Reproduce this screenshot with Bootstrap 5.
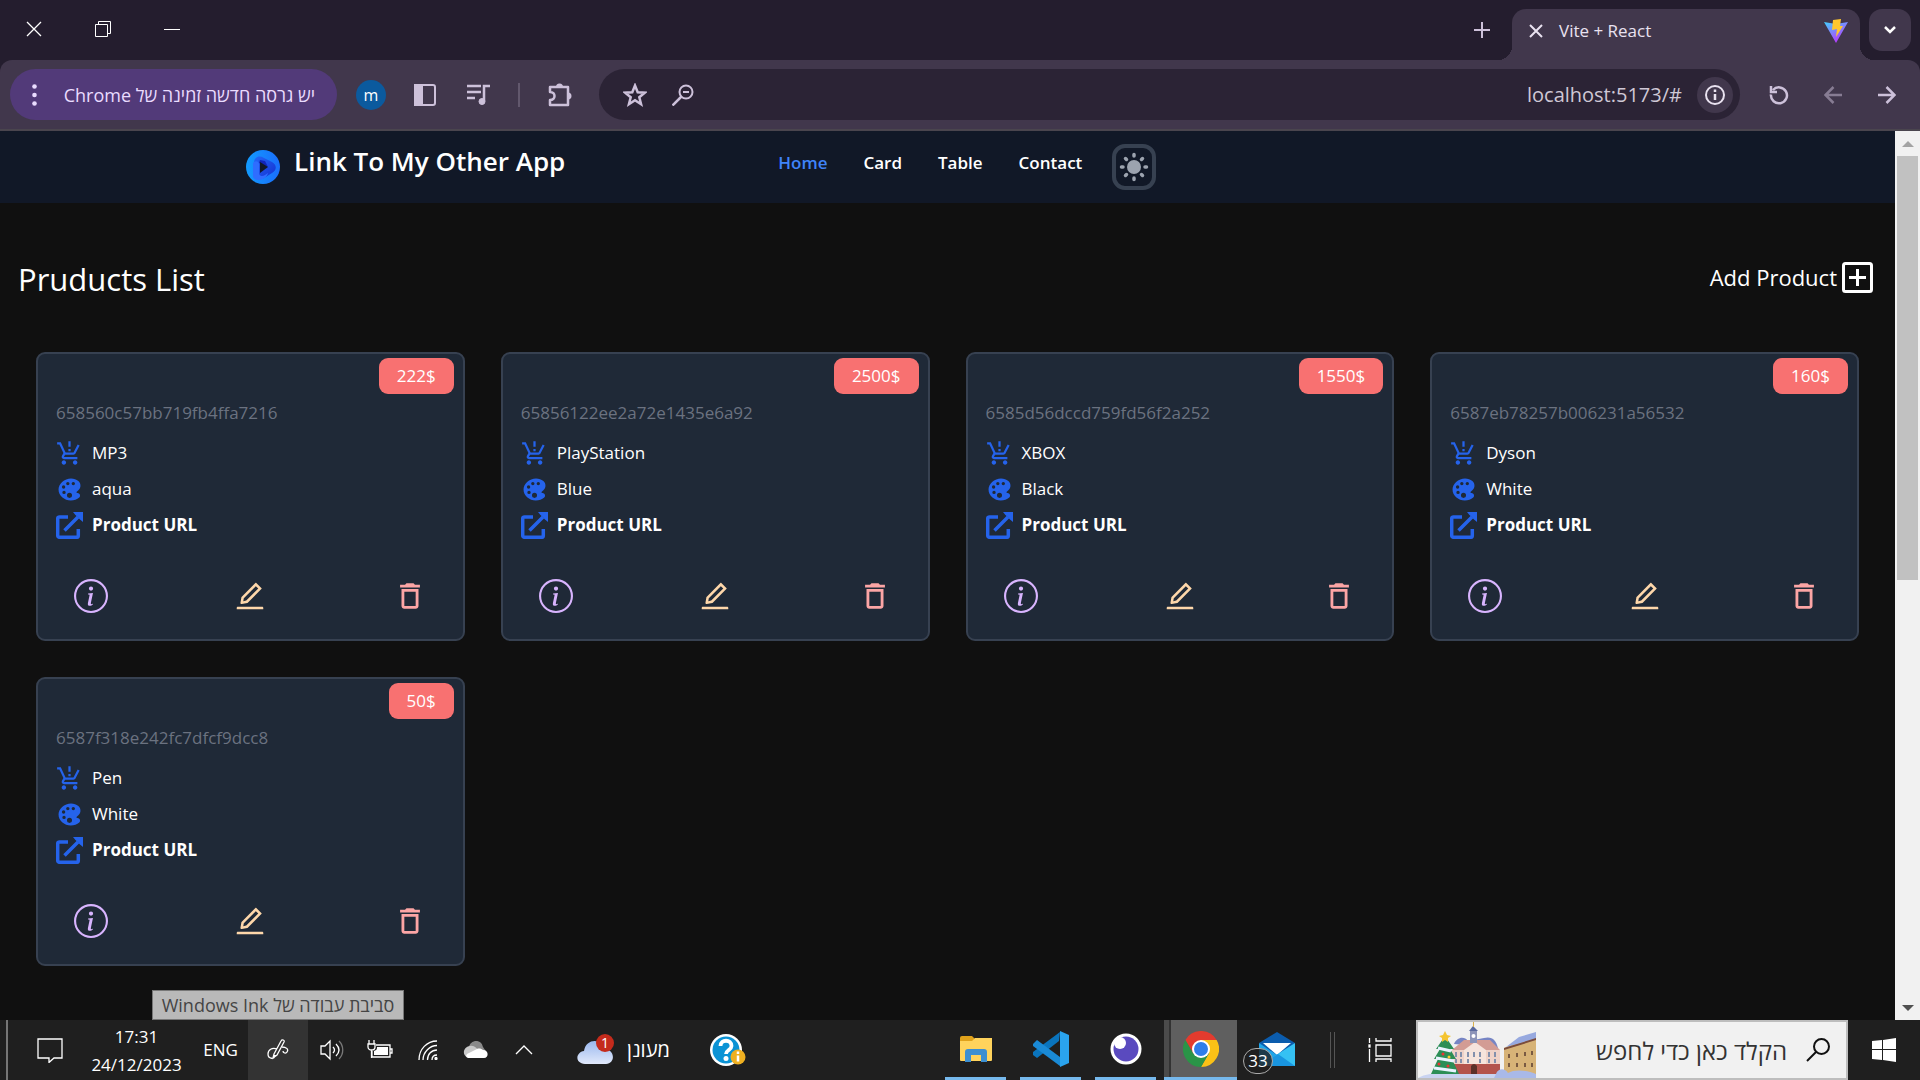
<!DOCTYPE html>
<html lang="en">
<head>
<meta charset="utf-8">
<meta name="viewport" content="width=device-width, initial-scale=1">
<title>Vite + React</title>
<link href="https://cdn.jsdelivr.net/npm/bootstrap@5.3.0/dist/css/bootstrap.min.css" rel="stylesheet">
<style>
  body { font-family: "Open Sans", "Noto Sans", sans-serif; font-size: 17px; line-height: 24px; background: #101010; color: #fff; }
  button { color: inherit; background: none; border: 0; padding: 0; }
  svg { display: block; flex: none; }
  .ic { fill: none; stroke: currentColor; stroke-width: 2; }
  .hair { stroke-width: 1; }
  .thin { stroke-width: 1.3; }

  /* browser frame */
  .tabstrip { height: 60px; background: #241d2e; }
  .win-btns { margin-left: -1px; }
  .win-btn { width: 69px; height: 58px; }
  .new-tab { width: 60px; height: 60px; color: #cdc1da; }
  .tab-active { width: 348px; height: 51px; border-radius: 14px 14px 0 0; background: #41374c; position: relative; padding: 0 12px 8px 17px; color: #e9e2f0; font-size: 17px; }
  .tab-active::before, .tab-active::after { content: ""; position: absolute; bottom: 0; width: 14px; height: 14px; }
  .tab-active::before { left: -14px; background: radial-gradient(circle at 0 0, transparent 14px, #41374c 14px); }
  .tab-active::after { right: -14px; background: radial-gradient(circle at 100% 0, transparent 14px, #41374c 14px); }
  .tab-list { width: 42px; height: 42px; border-radius: 13px; background: #41374c; margin: 9px; }
  .toolbar-wrap { background: #241d2e; }
  .toolbar { height: 71px; padding: 0 6px 0 10px; background: #41374c; border-bottom: 2px solid #4a454e; border-radius: 12px 12px 0 0; color: #cdc1da; }
  .update-pill { height: 51px; width: 327px; border-radius: 26px; background: #523a79; color: #eadcff; font-size: 18px; padding: 0 22px; }
  .avatar { width: 30px; height: 30px; border-radius: 50%; background: #0b5a9e; color: #fff; font-size: 16px; margin: 0 12px 0 19px; }
  .tool { width: 54px; height: 48px; }
  .tool-line { width: 2px; height: 24px; background: #62586d; margin: 0 14px 0 12px; }
  .omnibox { height: 51px; border-radius: 26px; background: #2b2335; padding: 0 7px 0 12px; margin: 0 12px 0 11px; }
  .omnibox .tool { width: 48px; }
  .address { background: none; border: 0; outline: 0; color: #cfc8d6; font-size: 20px; text-align: right; min-width: 0; }
  .site-info { width: 36px; height: 36px; border-radius: 50%; background: #41374c; color: #e9e2f0; margin-left: 13px; }

  /* application */
  .site-nav { min-height: 72px; background: #111827; padding: 12px 0 12px 246px; }
  .brand-logo { margin: 6px 14px 0 0; }
  .brand-name { font-size: 26px; line-height: 36px; font-weight: 600; color: #fff; text-decoration: none; }
  .site-links { gap: 36px; margin-left: 213px; padding-top: 8px; }
  .site-links a { color: #fff; font-weight: 600; font-size: 17px; text-decoration: none; }
  .site-links a.here { color: #3f83f8; }
  .theme-btn { width: 44px; height: 46px; border: 4px solid #374151; border-radius: 13px; color: #9ca3af; margin: 1px 0 0 30px; }
  .list-head { padding: 53px 22px 50px 18px; }
  .list-title { font-size: 31px; line-height: 46px; font-weight: 400; }
  .add-btn { font-size: 22px; line-height: 32px; gap: 5px; margin-bottom: 4px; }
  .products { padding: 0 36px; }
  .products > .row { --bs-gutter-x: 36px; --bs-gutter-y: 0; row-gap: 36px; }
  .product { min-height: 289px; border: 2px solid #374151; border-radius: 9px; background: #1f2937; color: #fff; padding: 44px 18px 0; }
  .price { position: absolute; top: 4px; right: 9px; height: 36px; border-radius: 9px; background: #f87171; padding: 6px 18px; }
  .pid { color: #6b7280; margin-bottom: 7px; line-height: 30px; }
  .field { gap: 9px; height: 36px; }
  .field svg { color: #2563eb; }
  .field a { color: #fff; font-weight: 700; text-decoration: none; }
  .actions { padding: 36px 18px 0; }
  .c-info { color: #d8b4fe; } .c-edit { color: #fed7aa; } .c-del { color: #fca5a5; }
  .sbar { width: 25px; background: #f1f1f1; padding: 0 2px; }
  .sbar-cap { height: 25px; }
  .sbar-thumb { background: #c1c1c1; }

  /* desktop task bar */
  .taskbar { height: 60px; background: #1f1f1f; }
  .edge { width: 8px; border-right: 2px solid #767676; margin-right: 12px; }
  .cell { width: 48px; }
  .cell-m { width: 60px; }
  .clock { width: 113px; font-size: 17px; line-height: 28px; padding-top: 3px; }
  .lang { width: 55px; font-size: 17px; }
  .ink { background: #333; position: relative; }
  .tip { position: absolute; bottom: 100%; left: 50%; transform: translateX(-50%); white-space: nowrap; background: #b9b9b9; border: 1px solid #777; color: #454545; width: 252px; line-height: 28px; font-size: 18px; }
  .weather { margin-left: 29px; gap: 12px; font-size: 20px; }
  .help { margin-left: 40px; }
  .app { width: 61px; margin-right: 14px; border-bottom: 3px solid #76b9ed; }
  .app-on { width: 73px; margin: 0 9px 0 -6px; background: linear-gradient(90deg, #4b4b4b 5px, #333 5px, #333 7px, #5f5f5f 7px); }
  .app-off { border-color: transparent; position: relative; margin-right: 23px; }
  .mail-count { position: absolute; left: -3px; bottom: 3px; width: 30px; height: 26px; border: 1px solid #aaa; border-radius: 13px; background: #1f1f1fcc; font-size: 17px; line-height: 24px; }
  .grip { width: 5px; height: 36px; border: solid #555; border-width: 0 1px; margin-right: 15px; }
  .search { width: 432px; margin-left: 6px; border: 2px solid #bdbdbd; background: #f1f1f1; padding-right: 16px; color: #111; }
  .search input { border: 0; outline: 0; background: none; color: #333; min-width: 0; font-size: 24px; padding: 0 19px; }
  .search input::placeholder { color: #333; opacity: 1; }
  .start { width: 72px; }
</style>
<script src="https://cdn.jsdelivr.net/npm/bootstrap@5.3.0/dist/js/bootstrap.bundle.min.js"></script>
</head>
<body class="d-flex flex-column min-vh-100 overflow-x-hidden">

<svg width="0" height="0" class="position-absolute" aria-hidden="true">
  <symbol id="cart" viewBox="0 0 24 24"><path fill="currentColor" d="M13 10h-2V8h2v2zm0-4h-2V1h2v5zM7 18c-1.1 0-1.99.9-1.99 2S5.900 22 7 22s2-.9 2-2-.9-2-2-2zm10 0c-1.100 0-1.990.9-1.990 2s.890 2 1.990 2 2-.9 2-2-.9-2-2-2zm-8.900-5h7.450c.75 0 1.410-.41 1.750-1.030L21 4.960 19.250 4l-3.700 7H8.530L4.270 2H1v2h2l3.600 7.590-1.350 2.440C4.520 15.370 5.480 17 7 17h12v-2H7l1.100-2z"/></symbol>
  <symbol id="palette" viewBox="0 0 512 512"><path fill="currentColor" d="M441 336.2l-.06-.05c-9.930-9.180-22.780-11.340-32.160-12.920l-.69-.12c-9.050-1.490-10.480-2.500-14.580-6.170-2.440-2.170-5.350-5.650-5.350-9.940s2.910-7.770 5.340-9.940l30.280-26.870c25.920-22.910 40.200-53.660 40.200-86.590s-14.250-63.680-40.200-86.600c-35.890-31.590-85-49-138.370-49C223.720 48 162 71.370 116 112.110c-43.870 38.770-68 90.710-68 146.240s24.160 107.470 68 146.230c21.750 19.240 47.490 34.180 76.520 44.420a266.170 266.170 0 0 0 86.870 15h1.810c61 0 119.090-20.570 159.390-56.400 9.700-8.560 15.150-20.830 15.340-34.560.21-14.170-5.370-27.950-14.930-36.840zM112 208a32 32 0 1 1 32 32 32 32 0 0 1-32-32zm40 135a32 32 0 1 1 32-32 32 32 0 0 1-32 32zm40-199a32 32 0 1 1 32 32 32 32 0 0 1-32-32zm64 271a48 48 0 1 1 48-48 48 48 0 0 1-48 48zm72-239a32 32 0 1 1 32-32 32 32 0 0 1-32 32z"/></symbol>
  <symbol id="open" viewBox="0 0 27 27"><path fill="none" stroke="currentColor" stroke-width="3.500" d="M12 5H3.500a1.800 1.800 0 0 0-1.800 1.800v16.700a1.800 1.800 0 0 0 1.800 1.800h17a1.800 1.800 0 0 0 1.800-1.800V17M8.500 18.500 22 5"/><path fill="currentColor" d="M17 0h10v10l-3-2.500-5-5z"/></symbol>
  <symbol id="info" viewBox="0 0 16 16"><path fill="currentColor" d="M8 15A7 7 0 1 1 8 1a7 7 0 0 1 0 14zm0 1A8 8 0 1 0 8 0a8 8 0 0 0 0 16z"/><path fill="currentColor" d="m8.930 6.588-2.290.287-.082.38.45.083c.294.07.352.176.288.469l-.738 3.468c-.194.897.105 1.319.808 1.319.545 0 1.178-.252 1.465-.598l.088-.416c-.2.176-.492.246-.686.246-.275 0-.375-.193-.304-.533L8.930 6.588zM9 4.500a1 1 0 1 1-2 0 1 1 0 0 1 2 0z"/></symbol>
  <symbol id="edit" viewBox="0 0 1024 1024"><path fill="currentColor" d="M257.700 752c2 0 4-.2 6-.5L431.900 722c2-.4 3.900-1.300 5.300-2.800l423.900-423.900a9.960 9.960 0 0 0 0-14.100L694.900 114.900c-1.900-1.900-4.400-2.900-7.100-2.900s-5.200 1-7.100 2.900L256.800 538.800c-1.500 1.500-2.400 3.300-2.800 5.300l-29.500 168.200a33.500 33.500 0 0 0 9.400 29.800c6.600 6.400 14.900 9.900 23.800 9.900zm67.400-174.400L687.800 215l73.300 73.300-362.700 362.600-88.900 15.700 15.600-89zM880 836H144c-17.700 0-32 14.300-32 32v36c0 4.400 3.600 8 8 8h784c4.400 0 8-3.600 8-8v-36c0-17.700-14.300-32-32-32z"/></symbol>
  <symbol id="trash" viewBox="0 0 24 24"><path fill="currentColor" d="M16 9v10H8V9h8m-1.500-6h-5l-1 1H5v2h14V4h-3.500l-1-1zM18 7H6v12c0 1.100.9 2 2 2h8c1.100 0 2-.9 2-2V7z"/></symbol>
</svg>

<header>
  <div class="tabstrip d-flex align-items-start">
    <div class="win-btns d-flex">
      <button class="win-btn d-flex align-items-center justify-content-center" aria-label="Close window"><svg class="ic thin" width="16" height="16"><path d="m1 1 14 14M15 1 1 15"/></svg></button>
      <button class="win-btn d-flex align-items-center justify-content-center" aria-label="Restore window"><svg class="ic hair" width="16" height="16"><path d="M.5 3.500h12v12H.5zM3.500 3.500v-3h12v12h-3"/></svg></button>
      <button class="win-btn d-flex align-items-center justify-content-center" aria-label="Minimize window"><svg class="ic hair" width="16" height="16"><path d="M0 8.500h16"/></svg></button>
    </div>
    <button class="new-tab ms-auto d-flex align-items-center justify-content-center" aria-label="New tab"><svg class="ic" width="16" height="16"><path d="M0 8h16M8 0v16"/></svg></button>
    <div class="tab-active d-flex align-items-center align-self-end">
      <button class="me-3" aria-label="Close tab"><svg class="ic" width="14" height="14"><path d="m1 1 12 12M13 1 1 13"/></svg></button>
      <span>Vite + React</span>
      <svg class="ms-auto" width="24" height="24" viewBox="0 0 24 24"><defs><linearGradient id="vg" x1="0" y1="0" x2=".6" y2="1"><stop offset="0" stop-color="#41d1ff"/><stop offset="1" stop-color="#bd34fe"/></linearGradient></defs><path fill="url(#vg)" d="M0 3 12 24 24 3 12 5z"/><path fill="#ffc72e" d="m9 1 8-1-1 7h3l-7 11 1-8-5 1z"/></svg>
    </div>
    <button class="tab-list d-flex align-items-center justify-content-center" aria-label="Search tabs"><svg class="ic" width="14" height="9"><path stroke-width="2.500" d="m2 1 5 5 5-5"/></svg></button>
  </div>
  <div class="toolbar-wrap">
  <div class="toolbar d-flex align-items-center">
    <button class="update-pill d-flex align-items-center justify-content-between">
      <svg width="5" height="22" fill="currentColor"><circle cx="2.500" cy="2.500" r="2.300"/><circle cx="2.500" cy="11" r="2.300"/><circle cx="2.500" cy="19.500" r="2.300"/></svg>
      <span dir="rtl">יש גרסה חדשה זמינה של Chrome</span>
    </button>
    <button class="avatar d-flex align-items-center justify-content-center" aria-label="Profile">m</button>
    <button class="tool d-flex align-items-center justify-content-center" aria-label="Side panel"><svg class="ic" width="22" height="22"><rect x="1" y="1" width="20" height="20" rx="2"/><path fill="currentColor" d="M1 1h7v20H1z"/></svg></button>
    <button class="tool d-flex align-items-center justify-content-center" aria-label="Media"><svg class="ic" width="24" height="22"><path stroke-width="2.500" d="M0 2h14M0 8h14M0 14h8M17 17V2h6"/><circle cx="15" cy="17.500" r="3" fill="currentColor" stroke-width="1"/></svg></button>
    <span class="tool-line"></span>
    <button class="tool d-flex align-items-center justify-content-center" aria-label="Extensions"><svg class="ic" width="26" height="26"><path stroke-width="2.500" d="M2 5h18v18H2v-5c6 0 6-8 0-8z" stroke-linejoin="round"/><path stroke="none" fill="currentColor" d="M8 5a3.500 3.500 0 0 1 7 0zm12 5.500a3.500 3.500 0 0 1 0 7z"/></svg></button>
    <div class="omnibox d-flex align-items-center flex-grow-1">
      <button class="tool d-flex align-items-center justify-content-center" aria-label="Bookmark"><svg class="ic" width="24" height="24"><path stroke-width="2.500" d="m12 2.500 2.700 6.700 7 .5-5.400 4.500 1.800 7L12 17.300l-6.100 3.900 1.800-7-5.400-4.500 7-.5z"/></svg></button>
      <button class="tool d-flex align-items-center justify-content-center" aria-label="Zoom"><svg class="ic" width="22" height="22"><circle cx="14" cy="8" r="6.500"/><path stroke-width="2.500" d="m9.500 12.500-9 9"/><path d="M11 8h6"/></svg></button>
      <input class="address flex-grow-1" aria-label="Address" value="localhost:5173/#">
      <button class="site-info d-flex align-items-center justify-content-center" aria-label="Site information"><svg class="ic" width="22" height="22"><circle cx="11" cy="11" r="9"/><path stroke-width="2.500" d="M11 10v6M11 5.500V8"/></svg></button>
    </div>
    <button class="tool d-flex align-items-center justify-content-center" aria-label="Reload"><svg class="ic" width="20" height="20"><path stroke-width="2.500" d="M2 9.500A8 8 0 1 0 4 5M2 1v6h6"/></svg></button>
    <button class="tool d-flex align-items-center justify-content-center opacity-50" aria-label="Back"><svg class="ic" width="18" height="18"><path stroke-width="2.500" d="M18 9H2M9.500 1 1.500 9l8 8"/></svg></button>
    <button class="tool d-flex align-items-center justify-content-center" aria-label="Forward"><svg class="ic" width="18" height="18"><path stroke-width="2.500" d="M0 9h16M8.500 1l8 8-8 8"/></svg></button>
  </div>
  </div>
</header>

<div class="d-flex flex-grow-1">
  <div class="flex-grow-1">
    <nav class="site-nav d-flex align-items-start">
      <svg class="brand-logo" width="34" height="36" viewBox="0 0 34 36"><defs><linearGradient id="lg" x1="0" y1="0" x2="1" y2="0"><stop offset="0" stop-color="#129bff"/><stop offset="1" stop-color="#1a6dfb"/></linearGradient><linearGradient id="lb" x1="0" y1="0" x2="1" y2="1"><stop offset="0" stop-color="#2367f8"/><stop offset="1" stop-color="#1430cf"/></linearGradient></defs><circle cx="17" cy="18" r="17" fill="url(#lg)"/><path fill="url(#lb)" d="M8 14c0-6 5-8 10-5l8 4c5 3 5 8 0 11l-8 5c-4 2-10 1-10-4z"/><path fill="#2f6dff" d="M7 27V14c2-3 6-2 6 1v9c0 3 3 4 6 2l3-2c-1 4-5 7-9 7-3 0-6-1-6-4z"/><path fill="#1225b8" d="m13 14 9 4-3-6-5-1z"/><path fill="#111827" d="m14 13 8 5-8 6z"/></svg>
      <a class="brand-name" href="#">Link To My Other App</a>
      <div class="site-links d-flex"><a class="here" href="#">Home</a><a href="#">Card</a><a href="#">Table</a><a href="#">Contact</a></div>
      <button class="theme-btn d-flex align-items-center justify-content-center" aria-label="Toggle theme"><svg width="30" height="30" viewBox="-15 -15 30 30" fill="none" stroke="currentColor" stroke-width="3.500" stroke-linecap="round"><circle r="7" fill="currentColor" stroke="none"/><path d="M0-12.500v1.500M0 12.500v-1.500M-12.500 0h1.500M12.500 0h-1.500M-8.500-8.500l1 1M8.500 8.500l-1-1M-8.500 8.500l1-1M8.500-8.500l-1 1"/></svg></button>
    </nav>
    <main>
      <div class="list-head d-flex justify-content-between align-items-center">
        <h1 class="list-title mb-0">Pruducts List</h1>
        <button class="add-btn d-flex align-items-center">Add Product <svg class="ic" width="31" height="31"><rect x="1.500" y="1.500" width="28" height="28" rx="2" stroke-width="3"/><path stroke-width="3" d="M7 15.500h17M15.500 7v17"/></svg></button>
      </div>
      <div class="products">
        <div class="row row-cols-4">
          <div class="col"><article class="card product">
            <span class="price">222$</span>
            <div class="pid">658560c57bb719fb4ffa7216</div>
            <div class="field d-flex align-items-center"><svg width="27" height="27"><use href="#cart"/></svg>MP3</div>
            <div class="field d-flex align-items-center"><svg width="27" height="27"><use href="#palette"/></svg>aqua</div>
            <div class="field d-flex align-items-center"><svg width="27" height="27"><use href="#open"/></svg><a href="#">Product URL</a></div>
            <div class="actions d-flex justify-content-between"><button class="c-info" aria-label="Details"><svg width="34" height="34"><use href="#info"/></svg></button><button class="c-edit" aria-label="Edit"><svg width="34" height="34"><use href="#edit"/></svg></button><button class="c-del" aria-label="Delete"><svg width="34" height="34"><use href="#trash"/></svg></button></div>
          </article></div>
          <div class="col"><article class="card product">
            <span class="price">2500$</span>
            <div class="pid">65856122ee2a72e1435e6a92</div>
            <div class="field d-flex align-items-center"><svg width="27" height="27"><use href="#cart"/></svg>PlayStation</div>
            <div class="field d-flex align-items-center"><svg width="27" height="27"><use href="#palette"/></svg>Blue</div>
            <div class="field d-flex align-items-center"><svg width="27" height="27"><use href="#open"/></svg><a href="#">Product URL</a></div>
            <div class="actions d-flex justify-content-between"><button class="c-info" aria-label="Details"><svg width="34" height="34"><use href="#info"/></svg></button><button class="c-edit" aria-label="Edit"><svg width="34" height="34"><use href="#edit"/></svg></button><button class="c-del" aria-label="Delete"><svg width="34" height="34"><use href="#trash"/></svg></button></div>
          </article></div>
          <div class="col"><article class="card product">
            <span class="price">1550$</span>
            <div class="pid">6585d56dccd759fd56f2a252</div>
            <div class="field d-flex align-items-center"><svg width="27" height="27"><use href="#cart"/></svg>XBOX</div>
            <div class="field d-flex align-items-center"><svg width="27" height="27"><use href="#palette"/></svg>Black</div>
            <div class="field d-flex align-items-center"><svg width="27" height="27"><use href="#open"/></svg><a href="#">Product URL</a></div>
            <div class="actions d-flex justify-content-between"><button class="c-info" aria-label="Details"><svg width="34" height="34"><use href="#info"/></svg></button><button class="c-edit" aria-label="Edit"><svg width="34" height="34"><use href="#edit"/></svg></button><button class="c-del" aria-label="Delete"><svg width="34" height="34"><use href="#trash"/></svg></button></div>
          </article></div>
          <div class="col"><article class="card product">
            <span class="price">160$</span>
            <div class="pid">6587eb78257b006231a56532</div>
            <div class="field d-flex align-items-center"><svg width="27" height="27"><use href="#cart"/></svg>Dyson</div>
            <div class="field d-flex align-items-center"><svg width="27" height="27"><use href="#palette"/></svg>White</div>
            <div class="field d-flex align-items-center"><svg width="27" height="27"><use href="#open"/></svg><a href="#">Product URL</a></div>
            <div class="actions d-flex justify-content-between"><button class="c-info" aria-label="Details"><svg width="34" height="34"><use href="#info"/></svg></button><button class="c-edit" aria-label="Edit"><svg width="34" height="34"><use href="#edit"/></svg></button><button class="c-del" aria-label="Delete"><svg width="34" height="34"><use href="#trash"/></svg></button></div>
          </article></div>
          <div class="col"><article class="card product">
            <span class="price">50$</span>
            <div class="pid">6587f318e242fc7dfcf9dcc8</div>
            <div class="field d-flex align-items-center"><svg width="27" height="27"><use href="#cart"/></svg>Pen</div>
            <div class="field d-flex align-items-center"><svg width="27" height="27"><use href="#palette"/></svg>White</div>
            <div class="field d-flex align-items-center"><svg width="27" height="27"><use href="#open"/></svg><a href="#">Product URL</a></div>
            <div class="actions d-flex justify-content-between"><button class="c-info" aria-label="Details"><svg width="34" height="34"><use href="#info"/></svg></button><button class="c-edit" aria-label="Edit"><svg width="34" height="34"><use href="#edit"/></svg></button><button class="c-del" aria-label="Delete"><svg width="34" height="34"><use href="#trash"/></svg></button></div>
          </article></div>
        </div>
      </div>
    </main>
  </div>
  <div class="sbar d-flex flex-column" aria-hidden="true">
    <div class="sbar-cap d-flex align-items-center justify-content-center"><svg width="12" height="6"><path fill="#a3a3a3" d="m0 6 6-6 6 6z"/></svg></div>
    <div class="flex-grow-1 d-flex flex-column"><div class="sbar-thumb" style="flex:424"></div><div style="flex:415"></div></div>
    <div class="sbar-cap d-flex align-items-center justify-content-center"><svg width="12" height="6"><path fill="#505050" d="m0 0 6 6 6-6z"/></svg></div>
  </div>
</div>

<footer class="taskbar d-flex align-items-stretch">
  <div class="edge"></div>
  <button class="cell-m d-flex align-items-center justify-content-center" aria-label="Notifications"><svg class="ic thin" width="26" height="26"><path d="M1 2h24v19h-8l-5 4.500V21H1z"/></svg></button>
  <div class="clock text-center"><div>17:31</div><div>24/12/2023</div></div>
  <button class="lang">ENG</button>
  <button class="cell-m ink d-flex align-items-center justify-content-center" aria-label="Windows Ink"><svg class="ic thin" width="22" height="24"><path d="m7 16 7-13c1-2 4-1 3 1l-7 13-4 3zM10 11c-5-2-9 1-9 5 0 5 7 6 7 1M15 9c4 0 7 2 5 5-1 2-4 1-4-1"/></svg><span class="tip" dir="rtl">סביבת עבודה של Windows Ink</span></button>
  <button class="cell d-flex align-items-center justify-content-center" aria-label="Volume"><svg class="ic thin" width="24" height="22"><path d="M1 7h4l5-5v18l-5-5H1zM13 8c2 2 2 4 0 6M16 5c4 4 4 8 0 12"/><path opacity=".4" d="M19 2c5 5 5 13 0 18"/></svg></button>
  <button class="cell d-flex align-items-center justify-content-center" aria-label="Battery"><svg class="ic thin" width="26" height="20"><path d="M9 5h14v12H5v-6M23 9h2v4h-2M2 0v4M7 0v4M1 4h7v3c0 4-7 4-7 0zM4.500 10v8"/><path fill="currentColor" stroke="none" d="M10 7h11v8H7v-4c3-1 3-2 3-4z"/></svg></button>
  <button class="cell d-flex align-items-center justify-content-center" aria-label="Network"><svg class="ic thin" width="20" height="20"><path d="M1 20C1 9 9 1 19 1M5 20C5 12 12 5.500 19 5.500M9.500 20c0-6 4-10 9.500-10M14 20c0-4 2-5 5-5"/><circle cx="18" cy="18.500" r="1" fill="currentColor"/></svg></button>
  <button class="cell d-flex align-items-center justify-content-center" aria-label="OneDrive"><svg width="26" height="18"><path fill="#8a8a8a" d="M6 8a7 7 0 0 1 14-2l4 6H6z"/><path fill="#c9c9c9" d="M7 5c4-1 8 3 9 6L4 16C-1 14 0 6 7 5z"/><path fill="#fff" d="M5 17c-3-1-2-4 1-5l8-4c2-1 5 0 6 1 6 0 6 8 1 8z"/></svg></button>
  <button class="cell d-flex align-items-center justify-content-center" aria-label="Hidden icons"><svg class="ic thin" width="18" height="10"><path d="m1 9 8-8 8 8"/></svg></button>
  <button class="weather d-flex align-items-center">
    <svg width="38" height="32" viewBox="0 0 38 32"><defs><linearGradient id="cg" x1="0" y1="0" x2="0" y2="1"><stop offset="0" stop-color="#9ab8ee"/><stop offset="1" stop-color="#e1e9fb"/></linearGradient></defs><path fill="url(#cg)" d="M8 30C-3 29-1 18 7 17 9 4 25 4 27 15c11 0 12 14 2 15z"/><circle cx="28" cy="9" r="9" fill="#c42b1c"/><text x="28" y="14" text-anchor="middle" font-size="14" fill="#fff">1</text></svg>
    <span dir="rtl">מעונן</span>
  </button>
  <button class="help d-flex align-items-center" aria-label="Help"><svg width="36" height="34" viewBox="0 0 36 34"><circle cx="16" cy="17" r="16" fill="#fff"/><circle cx="16" cy="17" r="13.500" fill="#0b93d5"/><path d="M10.500 13c0-7 11-7 11 0 0 4-5.500 4-5.500 8" fill="none" stroke="#fff" stroke-width="3.800"/><circle cx="16" cy="25.500" r="2.500" fill="#fff"/><circle cx="28" cy="24" r="7.500" fill="#efb021"/><path stroke="#fff" stroke-width="2.500" d="M28 22.500v6M28 18.500V21"/></svg></button>

  <div class="d-flex ms-auto align-items-stretch">
    <button class="app d-flex align-items-center justify-content-center" aria-label="File Explorer"><svg width="32" height="28"><path fill="#e0a21b" d="M0 3q0-2 2-2h10l3 3-3 4H0z"/><path fill="#ffd35c" d="M0 6h12l3-3h17v22q0 1-1 1H1q-1 0-1-1z"/><path fill="#3d8fd1" d="M5 17q0-3 3-3h16q3 0 3 3v10h-6v-7H11v7H5z"/></svg></button>
    <button class="app d-flex align-items-center justify-content-center" aria-label="Visual Studio Code"><svg width="36" height="36" viewBox="0 0 36 36"><path fill="#0a74bd" d="m27 1-1 9L4 27l-4-3v-3z"/><path fill="#1a8ad6" d="m0 13 4-4 23 17v9L0 15z"/><path fill="#2aa3ee" d="m27 0 9 4v28l-9 4z"/></svg></button>
    <button class="app d-flex align-items-center justify-content-center" aria-label="Insomnia"><svg width="32" height="32"><circle cx="16" cy="16" r="15.500" fill="#fff"/><circle cx="16" cy="16" r="12.500" fill="#5a4abf"/><circle cx="10" cy="10" r="6" fill="#fff"/></svg></button>
    <button class="app app-on d-flex align-items-center justify-content-center" aria-label="Chrome"><svg width="36" height="36" viewBox="-18 -18 36 36"><path fill="#e33b2e" d="M0-9h15.600A18 18 0 0 0-15.600-9L-7.800 4.500 0 0z"/><path fill="#fbc116" d="M15.600-9A18 18 0 0 1 0 18L7.800 4.500 0-9z"/><path fill="#2a9447" d="M-15.600-9A18 18 0 0 0 0 18L7.800 4.500 0 9l-7.800-4.500z"/><circle r="9" fill="#fff"/><circle r="7" fill="#2f7de9"/></svg></button>
    <button class="app app-off d-flex align-items-center justify-content-center" aria-label="Mail"><svg width="36" height="34"><path fill="#0b5cad" d="M0 11 18 0l18 11-10 12H10z"/><path fill="#fff" d="M4 11h28L18 23z"/><path fill="#1fa5e8" d="m0 11 18 12v11H0z"/><path fill="#35c1f3" d="M36 11 0 34h36z"/><path fill="#1995e0" d="m19 22 17 12H0z"/></svg><span class="mail-count">33</span></button>
    <span class="grip align-self-center"></span>
    <button class="cell-m d-flex align-items-center justify-content-center" aria-label="Task view"><svg class="ic thin" width="24" height="24"><path d="M8 0v3h15V0M8 7h15v11H8zM8 24v-3h15v3M1.500 0v5M1.500 11v13"/><path fill="currentColor" d="M1 7h1v2H1z"/></svg></button>
    <div class="search d-flex align-items-center">
      <svg width="118" height="56" viewBox="0 0 118 56"><path fill="#c9d3f0" d="M0 56c10-6 30-6 50-4 20-4 50-4 68-2v6z"/><path fill="#7785c4" d="M36 22c2-6 10-9 14-3l16-3c8-2 12 2 14 10z"/><path fill="#d39c94" d="m34 28 12-10h26l10 10z"/><path fill="#efd2c8" d="M34 28h48v16H34z"/><path fill="#f6e4dc" d="m46 28 11-8 11 8v16H46z"/><path fill="#b4534c" d="M34 42h48v10H34z"/><path fill="#8c94b8" d="M52 8h7v13h-7z"/><path fill="#5b6a9e" d="m51 9 4-5 5 5z"/><path stroke="#d8b04c" d="M55.500 0v5"/><circle cx="55.500" cy="14" r="2" fill="#fff"/><path stroke="#8390ac" stroke-width="2" d="M38 30v5M43 30v5M50 30v5M56 30v5M62 30v5M71 30v5M77 30v5M38 37v4M43 37v4M50 37v4M62 37v4M71 37v4M77 37v4"/><path fill="#5b3029" d="M53 44q3-4 6 0v8h-6z"/><path fill="#d7b377" d="m86 26 32-13v40H86z"/><path fill="#97a9df" d="m88 25 13-10 17-5v7z"/><path fill="#7a4c3c" d="m86 26 32-10v2L86 28z"/><path stroke="#795a42" stroke-width="2" d="M91 32v4M99 31v4M107 30v4M114 29v4M91 41v4M99 41v4M107 41v4M114 41v4"/><path fill="#2c8e56" d="m27 14-9 13h4l-6 10h4l-7 15h28l-7-15h4l-6-10h4z"/><path stroke="#e9f3ff" stroke-width="3" d="m20 26 13 3M18 36l18 3M16 46l22 3"/><path fill="#f4c430" d="m27 9 2 4 4 1-3 2v4l-3-2-3 2v-4l-3-2 4-1z"/><circle cx="25" cy="32" r="1.500" fill="#e33"/><circle cx="31" cy="35" r="1.500" fill="#fc3"/><circle cx="21" cy="42" r="1.500" fill="#e33"/><circle cx="30" cy="44" r="1.500" fill="#e33"/><path fill="#a9b9e8" d="M78 52c2-6 9-6 12-1 6-4 20-3 28 1v4H76z"/></svg>
      <input class="flex-grow-1" type="text" dir="rtl" aria-label="Search" placeholder="הקלד כאן כדי לחפש">
      <svg class="ic thin" width="24" height="24"><circle cx="15.500" cy="8.500" r="7.500" stroke-width="2"/><path stroke-width="2" d="M10 14 1 23"/></svg>
    </div>
    <button class="start d-flex align-items-center justify-content-center" aria-label="Start"><svg width="24" height="24" fill="#fff"><path d="m0 3 10-1v9H0zM11 2l13-2v11H11zM0 12h10v10L0 21zM11 12h13v12l-13-2z"/></svg></button>
  </div>
</footer>
</body>
</html>
